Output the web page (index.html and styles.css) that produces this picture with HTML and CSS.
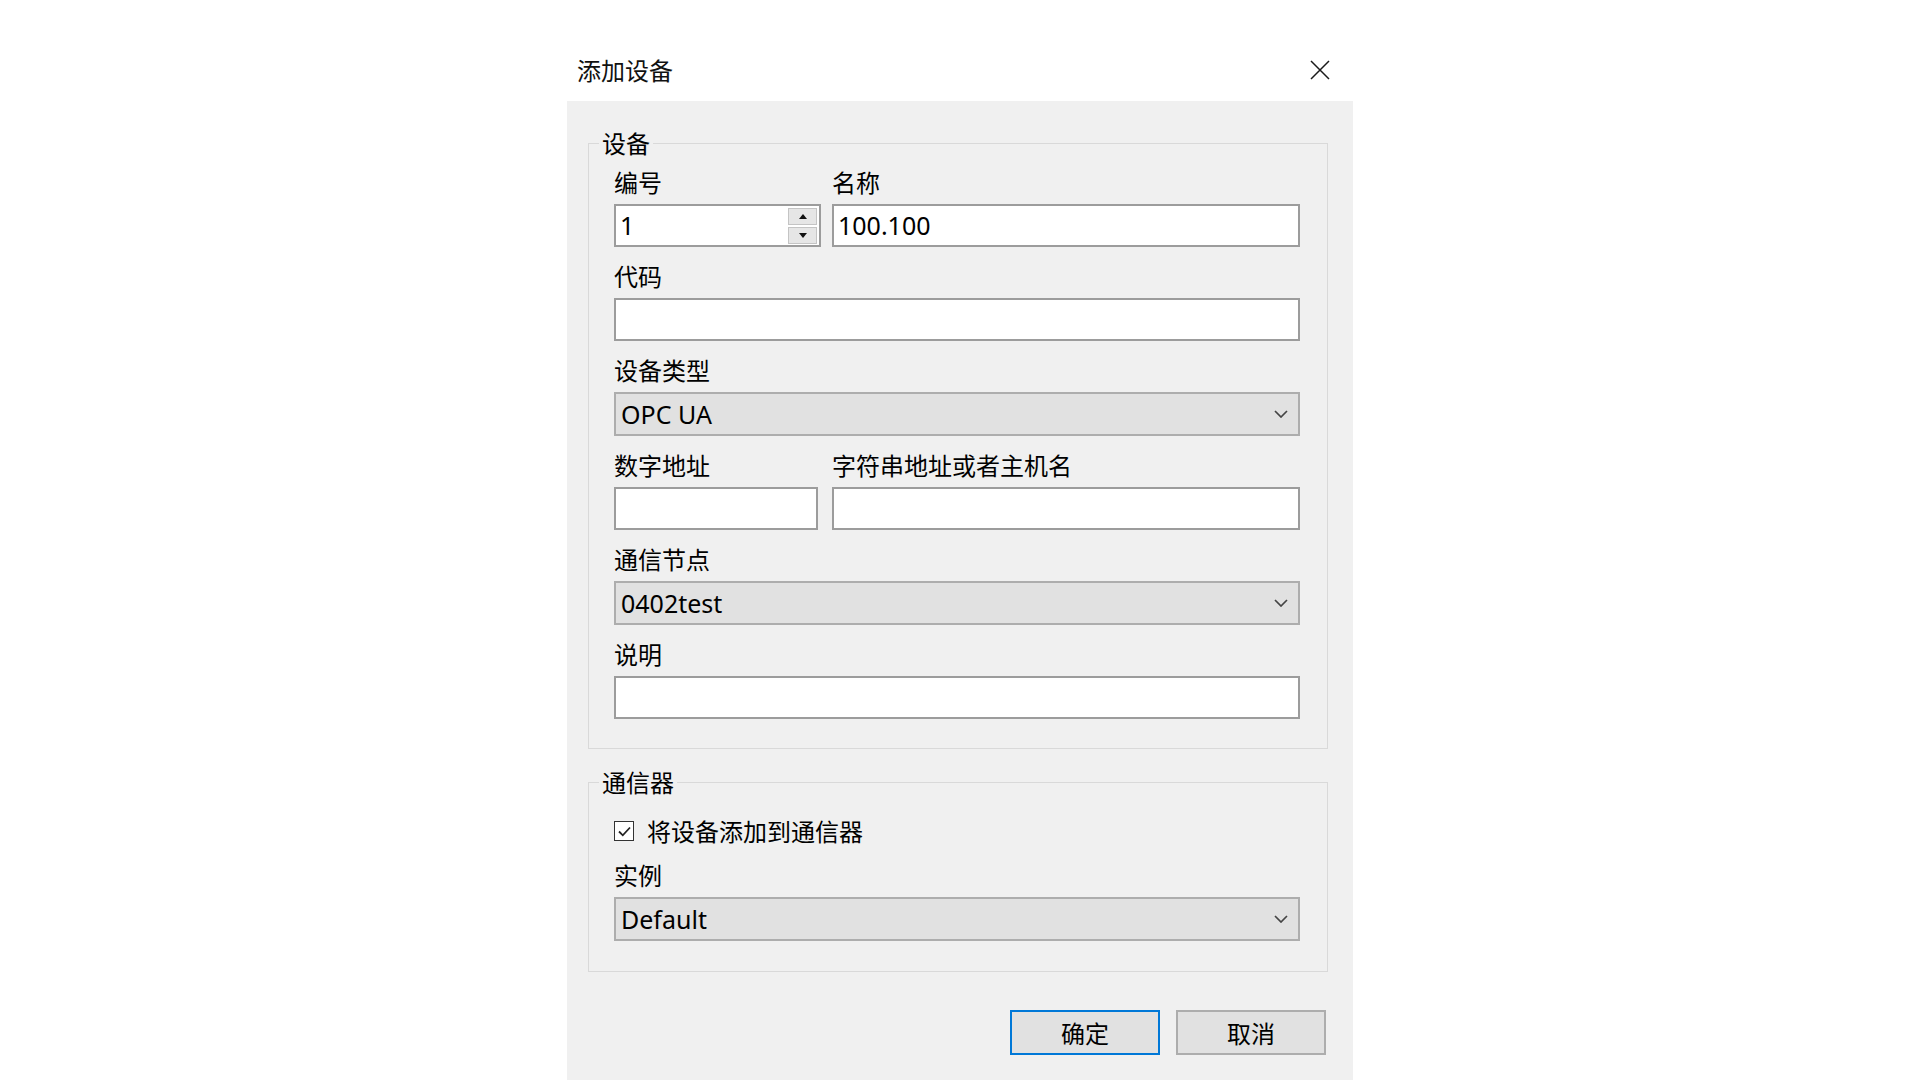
FILE: index.html
```html
<!DOCTYPE html>
<html lang="zh-CN">
<head>
<meta charset="utf-8">
<title>添加设备</title>
<link rel="stylesheet" href="styles.css">
</head>
<body>
<div class="dialog">
  <div class="titlebar">
    <span class="title">添加设备</span>
    <svg class="close" width="20" height="20" viewBox="0 0 20 20"><path d="M1 1L19 19M19 1L1 19" stroke="#1a1a1a" stroke-width="1.5" fill="none"/></svg>
  </div>
  <div class="panel">
    <fieldset class="group">
      <legend>设备</legend>
      <div class="group-body">
        <div class="row two">
          <div class="field">
            <div class="lbl">编号</div>
            <div class="spin">
              <span class="val">1</span>
              <div class="spin-btns">
                <span class="sb"><span class="tri up"></span></span>
                <span class="sb"><span class="tri down"></span></span>
              </div>
            </div>
          </div>
          <div class="field">
            <div class="lbl">名称</div>
            <div class="textbox"><span class="val">100.100</span></div>
          </div>
        </div>
        <div class="row">
          <div class="lbl">代码</div>
          <div class="textbox"></div>
        </div>
        <div class="row">
          <div class="lbl">设备类型</div>
          <div class="combo"><span class="val">OPC UA</span>
            <svg class="chev" width="14" height="8" viewBox="0 0 14 8"><path d="M1 1L7 7L13 1" stroke="#444" stroke-width="1.7" fill="none"/></svg>
          </div>
        </div>
        <div class="row two">
          <div class="field">
            <div class="lbl">数字地址</div>
            <div class="textbox narrow"></div>
          </div>
          <div class="field">
            <div class="lbl">字符串地址或者主机名</div>
            <div class="textbox"></div>
          </div>
        </div>
        <div class="row">
          <div class="lbl">通信节点</div>
          <div class="combo"><span class="val">0402test</span>
            <svg class="chev" width="14" height="8" viewBox="0 0 14 8"><path d="M1 1L7 7L13 1" stroke="#444" stroke-width="1.7" fill="none"/></svg>
          </div>
        </div>
        <div class="row">
          <div class="lbl">说明</div>
          <div class="textbox"></div>
        </div>
      </div>
    </fieldset>

    <fieldset class="group second">
      <legend>通信器</legend>
      <div class="group-body comm">
        <div class="check-row">
          <span class="checkbox"><svg width="17" height="17" viewBox="0 0 17 17"><path d="M3 8.5L6.8 12.3L14 4.5" stroke="#222" stroke-width="1.8" fill="none"/></svg></span>
          <span class="check-label">将设备添加到通信器</span>
        </div>
        <div class="row">
          <div class="lbl">实例</div>
          <div class="combo"><span class="val">Default</span>
            <svg class="chev" width="14" height="8" viewBox="0 0 14 8"><path d="M1 1L7 7L13 1" stroke="#444" stroke-width="1.7" fill="none"/></svg>
          </div>
        </div>
      </div>
    </fieldset>

    <div class="buttons">
      <button class="btn primary">确定</button>
      <button class="btn">取消</button>
    </div>
  </div>
</div>
</body>
</html>
```

FILE: styles.css
```css
html, body {
  margin: 0;
  padding: 0;
}
body {
  background: #ffffff;
  color: #000000;
  font-family: "Noto Sans", "Noto Sans CJK SC", sans-serif;
  font-size: 24px;
}
.dialog {
  width: 786px;
  margin: 0 auto;
  min-height: 100vh;
  display: flex;
  flex-direction: column;
}
.titlebar {
  height: 30px;
  margin-top: 55px;
  margin-bottom: 16px;
  padding-left: 10px;
  padding-right: 23px;
  display: flex;
  align-items: center;
  justify-content: space-between;
}
.title {
  font-family: "Noto Sans CJK SC", sans-serif;
  font-size: 24px;
  line-height: 28px;
  color: #111;
}
.close {
  display: block;
}
.panel {
  flex: 1;
  background: #f0f0f0;
  padding: 27px 25px 0 21px;
}
.group {
  margin: 0;
  padding: 0;
  border: 1px solid #d9d9d9;
  min-width: 0;
}
.group.second {
  margin-top: 18px;
}
.group legend {
  margin-left: 10px;
  padding: 0 3px;
  font-family: "Noto Sans CJK SC", sans-serif;
  font-size: 24px;
  line-height: 30px;
}
.group-body {
  padding: 10px 27px 29px 25px;
  display: flex;
  flex-direction: column;
  gap: 15px;
}
.group-body.comm {
  padding-top: 19px;
  padding-bottom: 30px;
}
.row {
  display: flex;
  flex-direction: column;
}
.row.two {
  display: grid;
  grid-template-columns: 218px 1fr;
}
.field {
  display: flex;
  flex-direction: column;
}
.lbl {
  font-family: "Noto Sans CJK SC", sans-serif;
  font-size: 24px;
  line-height: 28px;
  height: 30px;
  margin-bottom: 6px;
  white-space: nowrap;
}
.textbox {
  box-sizing: border-box;
  height: 43px;
  background: #ffffff;
  border: 2px solid #9c9c9c;
  padding-left: 4px;
  display: flex;
  align-items: center;
}
.textbox.narrow {
  width: 204px;
}
.val {
  font-family: "Noto Sans", sans-serif;
  font-size: 25px;
  line-height: 39px;
  white-space: nowrap;
}
.spin {
  box-sizing: border-box;
  width: 207px;
  height: 43px;
  background: #ffffff;
  border: 2px solid #9c9c9c;
  padding-left: 4px;
  display: flex;
  align-items: center;
  justify-content: space-between;
}
.spin-btns {
  display: flex;
  flex-direction: column;
  gap: 2px;
  margin-right: 2px;
}
.sb {
  box-sizing: border-box;
  width: 29px;
  height: 17px;
  background: #e6e6e6;
  border: 1px solid #c4c4c4;
  display: flex;
  align-items: center;
  justify-content: center;
}
.tri {
  width: 0;
  height: 0;
  border-left: 4px solid transparent;
  border-right: 4px solid transparent;
}
.tri.up {
  border-bottom: 5px solid #111;
}
.tri.down {
  border-top: 5px solid #111;
}
.combo {
  box-sizing: border-box;
  height: 44px;
  background: #e1e1e1;
  border: 2px solid #adadad;
  padding-left: 5px;
  padding-right: 10px;
  display: flex;
  align-items: center;
  justify-content: space-between;
}
.chev {
  display: block;
}
.check-row {
  height: 30px;
  display: flex;
  align-items: center;
}
.checkbox {
  box-sizing: border-box;
  width: 20px;
  height: 20px;
  border: 1px solid #333333;
  background: #ffffff;
  display: flex;
  align-items: center;
  justify-content: center;
}
.checkbox svg {
  display: block;
}
.check-label {
  margin-left: 13px;
  font-family: "Noto Sans CJK SC", sans-serif;
  font-size: 24px;
  line-height: 28px;
  white-space: nowrap;
}
.buttons {
  margin-top: 38px;
  padding-right: 2px;
  display: flex;
  justify-content: flex-end;
  gap: 16px;
}
.btn {
  box-sizing: border-box;
  width: 150px;
  height: 45px;
  margin: 0;
  padding: 0;
  background: #e1e1e1;
  border: 2px solid #adadad;
  border-radius: 0;
  color: #000;
  font-family: "Noto Sans CJK SC", sans-serif;
  font-size: 24px;
  line-height: 39px;
}
.btn.primary {
  border-color: #0078d7;
}
```
